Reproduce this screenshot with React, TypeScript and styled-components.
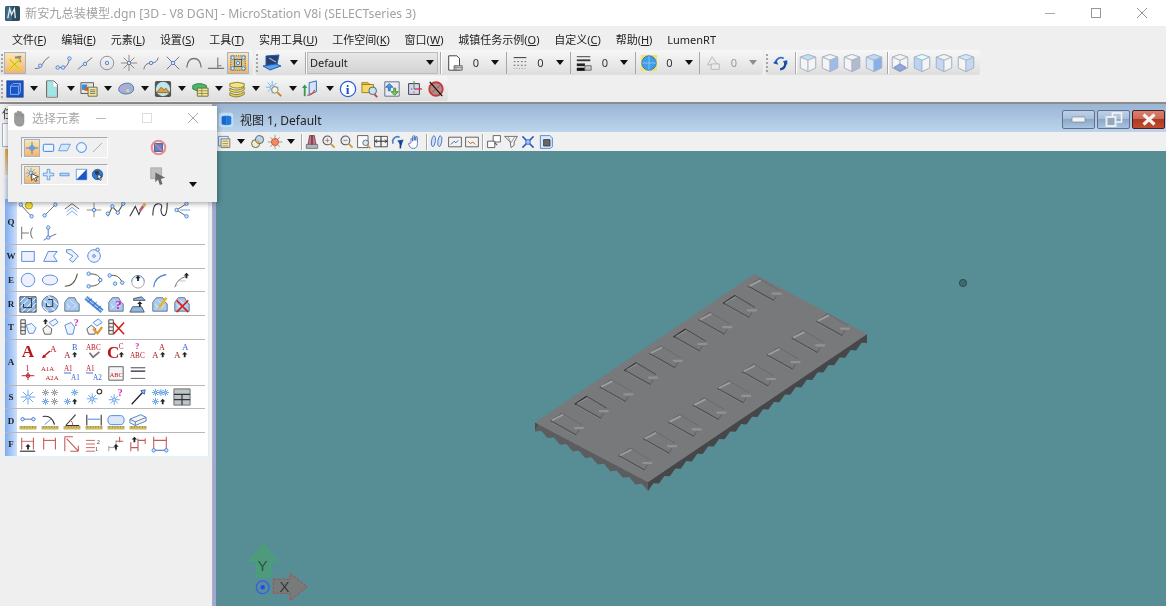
import React from "react";
import styled, { createGlobalStyle } from "styled-components";

const CJK = `"Noto Sans", "Noto Sans CJK SC", sans-serif`;

const GlobalStyle = createGlobalStyle`
	html, body {
		margin: 0;
		padding: 0;
		background: #efefef;
		overflow: hidden;
	}
	* {
		box-sizing: border-box;
	}
`;

/* small drawing helpers for the toolbar glyphs, all on a 20x20 grid */
const nd = (x: number, y: number) => (
	<circle cx={x} cy={y} r="1.9" fill="#dbe8fb" stroke="#3f7fd6" strokeWidth="1" />
);
const ln = (d: string, c = "#6a6a70", w = 1) => (
	<path d={d} fill="none" stroke={c} strokeWidth={w} />
);
const sh = (d: string, fill: string, stroke = "#4a86d8") => (
	<path d={d} fill={fill} stroke={stroke} strokeWidth="1" />
);
const txt = (x: number, y: number, s: string, size: number, c: string, bold = false) => (
	<text
		x={x}
		y={y}
		fontSize={size}
		fill={c}
		fontFamily='"Liberation Serif", serif'
		fontWeight={bold ? 700 : 400}
	>
		{s}
	</text>
);
const arrowUp = (x: number, y: number) => (
	<path d={`M${x} ${y}l3 3h-2v3h-2v-3h-2z`} fill="#222" />
);
const ruler = (
	<>
		<rect x="1" y="16" width="18" height="3" fill="#d8c25e" stroke="#a0903c" strokeWidth=".5" />
		{ln("M3 16v1.5M6 16v1.5M9 16v1.5M12 16v1.5M15 16v1.5M18 16v1.5", "#6b5f22", 0.7)}
	</>
);
const flake = (x: number, y: number, r: number, c = "#4a96e6") => (
	<>
		{ln(
			`M${x - r} ${y}H${x + r}M${x} ${y - r}V${y + r}M${x - r * 0.7} ${y - r * 0.7}L${x + r * 0.7} ${y + r * 0.7}M${x - r * 0.7} ${y + r * 0.7}L${x + r * 0.7} ${y - r * 0.7}`,
			c,
			0.9,
		)}
		<circle cx={x} cy={y} r={r * 0.3} fill="#cfe4fb" stroke={c} strokeWidth=".7" />
	</>
);
const area = (extra: React.ReactNode) => (
	<>
		{sh("M2 18V8l4-5h7l2 4 3 3v8z", "#a9c9ee", "#5b6f8a")}
		{ln("M4 10l3 3M8 6l4 4M5 15l3-3M11 15l3-3M13 10l2 2", "#e7f1fc", 1)}
		{extra}
	</>
);
const cube = (top: string, left: string, right: string) => (
	<>
		{sh("M10 0.5l8.5 3v12l-8.5 4-8.5-4v-12z", "#f4f4f4", "#a8b4c4")}
		{sh("M1.5 3.5l8.5 3.5 8.5-3.5-8.5-3z", top, "#a8b4c4")}
		{sh("M1.5 3.5l8.5 3.5v12.500l-8.5-4z", left, "#a8b4c4")}
		{sh("M18.500 3.500l-8.500 3.500v12.500l8.500-4z", right, "#a8b4c4")}
	</>
);
const dim = (body: React.ReactNode) => (
	<>
		{ln("M3 3v13M16 3v13", "#c45a5a", 1.2)}
		{body}
	</>
);

const ICONS: Record<string, React.ReactNode> = {
	select: (
		<>
			{ln("M10 4l7-1M14 3l2 6", "#8a8a8a", 2.4)}
			{ln("M4 6l11 11M15 6L4 17", "#f1e12a", 2.8)}
			{ln("M4 6l11 11M15 6L4 17", "#8c7a12", 0.5)}
		</>
	),
	s1: <>{ln("M2 16q6 1 8-4t8-9")}{nd(8, 13)}</>,
	s2: <>{ln("M3 15h6q5 0 7-9")}{nd(3, 15)}{nd(9, 15)}{nd(16, 5)}</>,
	s3: <>{ln("M2 17L18 4")}{nd(10, 11)}</>,
	s4: <><circle cx="10" cy="10" r="7.5" fill="none" stroke="#8a8a8a" />{nd(10, 10)}</>,
	s5: <>{ln("M1 10h18M10 1v18M4 4l12 12M16 4L4 16", "#8c7f6a")}{nd(10, 10)}</>,
	s6: <>{ln("M2 17q1-7 8-7t8-6")}{nd(10, 10)}</>,
	s7: <>{ln("M3 3l14 14M17 3L3 17")}{nd(10, 10)}</>,
	s8: <>{ln("M2 15q1-10 8-10t8 10", "#777", 1.4)}</>,
	s9: <>{ln("M1 16h18M12 4v12M12 13h4", "#777", 1.2)}</>,
	grid: (
		<>
			<rect x="2" y="2" width="16" height="16" fill="#d8c68c" stroke="#54503c" strokeDasharray="1 1" />
			<rect x="6" y="6" width="8" height="8" fill="none" stroke="#54503c" />
			{nd(4, 4)}{nd(16, 4)}{nd(4, 16)}{nd(16, 16)}{nd(10, 10)}
		</>
	),
	laptop: (
		<>
			{sh("M4 3l13-1-2 9-11 2z", "#2c3e66", "#1c5fbc")}
			{sh("M1 13l13-2 5 2-11 4z", "#5ba3e6", "#1c5fbc")}
			{ln("M7 5l7 4", "#7fb7ea", 1.4)}
		</>
	),
	colorDoc: (
		<>
			{sh("M3 2h9l3 3v13H3z", "#fff", "#333")}
			{sh("M9 13h9v5H9z", "#c9c9c9", "#666")}
			{ln("M9 15h9M11 13v5", "#777", 0.7)}
		</>
	),
	lines: <>{ln("M3 4h14", "#444", 1.2)}{ln("M3 8.500h2M7 8.500h2M11 8.500h2M15 8.500h2M3 12.500h2M7 12.500h2M11 12.500h2M15 12.500h2", "#555", 0.9)}{ln("M3 16h1M6 16h1M9 16h1M12 16h1M15 16h1", "#777", 0.8)}</>,
	weight: (
		<>
			{ln("M2 3h15", "#333", 1)}{ln("M2 7h15", "#333", 2)}{ln("M2 12h9", "#222", 3)}{ln("M2 17h9", "#111", 3.5)}
			{sh("M11 13h7v5h-7z", "#c9c9c9", "#666")}
		</>
	),
	transp: (
		<>
			<rect x="1" y="1" width="18" height="18" fill="#f1e078" />
			<circle cx="10" cy="10" r="8" fill="#3f9fe6" stroke="#2f6fae" />
			{ln("M2 10h16M10 2v16", "#9fd0f5", 0.8)}
		</>
	),
	prio: <>{sh("M9 3l6 9H4z", "#ececec", "#b4b4b4")}{sh("M8 11h9v6H8z", "#ececec", "#b4b4b4")}</>,
	update: (
		<>
			{ln("M4 11a6 6 0 0 1 9-6", "#3a6fc4", 2)}
			{ln("M14 8a6 6 0 0 1-5 9", "#12479e", 2.6)}
			<path d="M1 10l4-3 2 5zM12 8l5-1v5z" fill="#1c57b4" />
		</>
	),
	c1: cube("#bfe0f7", "#f4f4f4", "#f4f4f4"),
	c2: cube("#f4f4f4", "#f4f4f4", "#9dbcec"),
	c3: cube("#f4f4f4", "#f4f4f4", "#b3b9d0"),
	c4: cube("#bfd9f5", "#d5e6fa", "#86b0ea"),
	c5: <>{cube("#f4f4f4", "#f4f4f4", "#f4f4f4")}{sh("M3 15l7-4 7 4-7 4z", "#8fa9e0", "#7a8ab0")}</>,
	c6: cube("#dff", "#b8d4f4", "#f4f4f4"),
	c7: cube("#f4f4f4", "#c4d8f4", "#f4f4f4"),
	c8: cube("#d5e6fa", "#f4f4f4", "#c4d8f4"),
	blueCube: (
		<>
			<rect x="1" y="1" width="18" height="18" fill="#1a55c8" stroke="#123d96" />
			{ln("M5 7h9v9H5zM5 7l3-3h8v9l-2 3M14 7l2-3", "#8fb2ee", 1)}
		</>
	),
	doc: <>{sh("M4 1h8l4 4v14H4z", "#fff", "#555")}{sh("M5 2h6v6h4v10H5z", "#9fe6e6", "#aacccc")}</>,
	ref: (
		<>
			{sh("M1 3h14v12H1z", "#e6e6e6", "#555")}
			<rect x="2" y="5" width="6" height="6" fill="#2f8fe0" />
			<rect x="5" y="8" width="4" height="4" fill="#e25a2a" />
			{sh("M9 8h10v10H9z", "#f4e8a0", "#6a6a40")}
			{ln("M11 11h6M11 13h6M11 15h6", "#666", 0.9)}
		</>
	),
	ball: (
		<>
			{sh("M2 12q-1-6 6-8 7-2 10 3 2 6-4 8-8 2-12-3z", "#9ab2de", "#5c6f98")}
			<circle cx="7" cy="8" r="2" fill="#df97c4" />
			<circle cx="12" cy="12" r="2" fill="#e8d08a" />
		</>
	),
	render: (
		<>
			<rect x="1" y="1" width="18" height="18" rx="2" fill="#555" />
			<circle cx="10" cy="10" r="8" fill="#bfe3ef" />
			{sh("M3 14l5-6 3 3 2-2 4 5z", "#d9a040", "#9a6a1a")}
		</>
	),
	tableDb: (
		<>
			{sh("M2 6q7-4 15 0v4q-8 4-15 0z", "#49b86a", "#2a7c42")}
			{sh("M7 9h12v9H7z", "#f2e59a", "#6d6a3c")}
			{ln("M7 12h12M7 15h12M12 9v9", "#6d6a3c", 0.7)}
		</>
	),
	stack: (
		<>
			{sh("M2 14q8 5 16-1v3q-8 5-16 1z", "#e3cf5e", "#8b7a2a")}
			{sh("M2 9q8 5 16-1v3q-8 5-16 1z", "#ecdc70", "#8b7a2a")}
			{sh("M2 4q8-3 16 0v3q-8 4-16 0z", "#f2e684", "#8b7a2a")}
		</>
	),
	lightMag: (
		<>
			{flake(8, 8, 7, "#5aa8e6")}
			<circle cx="11" cy="11" r="3.6" fill="#f4f4d8" stroke="#777" />
			{ln("M14 14l4 4", "#d07a2a", 2)}
		</>
	),
	transform: (
		<>
			{sh("M8 3l8-2v12l-8 3z", "#d4e4f8", "#2b62b0")}
			{ln("M3 18V8", "#2f9e4f", 2)}
			<path d="M3 5l3 4H0z" fill="#2f9e4f" />
			{ln("M6 17q6 0 8-6", "#d0443c", 1.4)}
		</>
	),
	info: (
		<>
			<circle cx="10" cy="10" r="8.5" fill="#fff" stroke="#2a62d8" strokeWidth="1.4" />
			{txt(7.6, 15.5, "i", 15, "#1a4fc8", true)}
		</>
	),
	folderSearch: (
		<>
			{sh("M1 3h7l2 2h-9z", "#f2c94a", "#9a7a1a")}
			{sh("M1 5h13v9H1z", "#f6d768", "#9a7a1a")}
			<circle cx="13" cy="12" r="4.2" fill="#bfe6f6" stroke="#555" />
			{ln("M15 16l3 3", "#c83a3a", 2)}
		</>
	),
	swap: (
		<>
			{sh("M2 2h16v16H2z", "#e4ecf4", "#667")}
			{sh("M7 4l4 4H8v4H6V8H3z", "#4a9ce6", "#2a6cb0")}
			{sh("M13 17l-4-4h3V9h2v4h3z", "#7ec850", "#4a8a2c")}
		</>
	),
	axes: (
		<>
			{sh("M4 4h12v12H4z", "#d6d4f4", "#333")}
			{ln("M10 1v9", "#2fa84f", 1.2)}
			{ln("M10 10h9", "#d8332c", 1.4)}
			{ln("M7 10h1M10 13v1", "#222", 1.2)}
		</>
	),
	noRender: (
		<>
			<circle cx="10" cy="10" r="7.5" fill="#a8908c" stroke="#c83a3a" strokeWidth="2" />
			{ln("M3 2l14 16", "#111", 1.4)}
			{ln("M5 14l10-8", "#c83a3a", 1)}
		</>
	),
	fence: (
		<>
			{sh("M2 3h12v12H2z", "#eaf2ff", "#2f7ad8")}
			{sh("M5 6h11v11H5z", "#f6e8a4", "#666")}
			{ln("M7 9h7M7 12h7M7 15h7", "#666", 0.8)}
		</>
	),
	sun: (
		<>
			{ln("M1 10h18M10 1v18M4 4l12 12M16 4L4 16", "#8a8a8a", 1)}
			<circle cx="10" cy="10" r="4.5" fill="#f08a6a" stroke="#c8502a" />
		</>
	),
	eyeBall: (
		<>
			<circle cx="7" cy="12" r="5" fill="#efefd0" stroke="#444" />
			<circle cx="12" cy="7" r="5" fill="#b8d8f0" stroke="#444" />
			<circle cx="10" cy="10" r="2" fill="#d8a838" />
		</>
	),
	lamp: (
		<>
			{sh("M7 2h6l2 12H5z", "#c8758a", "#6a3a4a")}
			{sh("M3 13h14v5H3z", "#b4b4bc", "#666")}
			{ln("M10 2v11", "#4a2a2a", 1.4)}
		</>
	),
	zoomIn: <><circle cx="8" cy="8" r="5.5" fill="#e6eef0" stroke="#556" strokeWidth="1.3" />{ln("M5.5 8h5M8 5.5v5", "#c06a3a")}{ln("M12 12l5 5", "#c89a4a", 2.4)}</>,
	zoomOut: <><circle cx="8" cy="8" r="5.5" fill="#e6eef0" stroke="#556" strokeWidth="1.3" />{ln("M5.5 8h5", "#c06a3a")}{ln("M12 12l5 5", "#c89a4a", 2.4)}</>,
	winArea: <>{sh("M2 2h13v15H2z", "#fff", "#444")}<circle cx="12" cy="11" r="3.5" fill="#d8e8f4" stroke="#555" />{ln("M14 14l4 4", "#c89a4a", 2)}</>,
	fit: <>{sh("M2 3h16v13H2z", "#f4f4f4", "#333")}{ln("M2 9h16M10 3v13M5 7l-2 2 2 2M15 7l2 2-2 2", "#222", 1.2)}</>,
	rotate: <>{ln("M4 12a6 6 0 0 1 8-8", "#4a7fd0", 2)}<path d="M9 8l8-1-3 8z" fill="#1f55a8" />{ln("M13 9v9", "#123d86", 2)}</>,
	hand: <>{sh("M5 11V6l1-1 1 1v3-6l1-1 1 1v5-5l1-1 1 1v5-4l1-1 1 1v8q0 6-5 6t-6-6z", "#fff", "#3a62b8")}</>,
	feet: <>{sh("M6 2q3 1 2 7t-3 7q-3-1-2-7t3-7z", "#cfe0f8", "#2f62b8")}{sh("M14 2q3 1 2 7t-3 7q-3-1-2-7t3-7z", "#cfe0f8", "#2f62b8")}</>,
	prevView: <>{sh("M2 4h16v12H2z", "#f2f2f2", "#444")}{ln("M5 13l4-4 2 2 3-3", "#2b62b0", 1.2)}</>,
	nextView: <>{sh("M2 4h16v12H2z", "#f2f2f2", "#444")}{ln("M5 9l3 3 3-2 3 3", "#b05a2b", 1.2)}</>,
	copyView: <>{sh("M9 2h9v8H9z", "#fff", "#444")}{sh("M2 9h9v8H2z", "#fff", "#444")}{ln("M11 11l3 3", "#2b62b0", 1.4)}</>,
	clip: <>{sh("M2 3h16l-4 7v4l-4 3-1-7z", "#f4f4f4", "#555")}{ln("M6 3l4 8 5-8", "#888")}</>,
	camera: <>{ln("M3 3l14 14M17 3L3 17", "#2f62c8", 2)}<circle cx="10" cy="10" r="3" fill="#9fc0f0" stroke="#2f62c8" /></>,
	viewSet: <>{sh("M3 2h12l3 3v11l-3 2H3z", "#dbe9fb", "#2f7ad8")}{sh("M7 7h8v8H7z", "#666", "#333")}</>,
	q1: <>{ln("M2 4l7 8 5 5", "#5a5a60")}{nd(2, 4)}{nd(14, 17)}<circle cx="11" cy="5" r="4" fill="#f4e03a" stroke="#a4942a" /></>,
	q2: <>{ln("M4 16L16 4")}{nd(4, 16)}{nd(16, 4)}</>,
	q3: <>{ln("M2 9l8-6 8 6", "#555")}{ln("M4 12l6-5 6 5", "#6ba2e6")}{ln("M4 16l6-5 6 5", "#6ba2e6")}</>,
	q4: <>{ln("M2 10h16M10 2v16", "#8c7f6a")}{nd(10, 10)}</>,
	q5: (
		<>
			{ln("M1 17L6 6l6 7 6-10", "#59502a", 1.2)}
			{nd(6, 6)}{nd(12, 13)}{nd(18, 3)}{nd(1, 14)}
		</>
	),
	q6: <>{ln("M1 17L7 6l4 9 4-9", "#333", 1.2)}{ln("M12 11l6-8", "#c85a8a", 3)}{ln("M16 6l2-3", "#e6c84a", 3)}</>,
	q7: <>{ln("M2 16q0-13 6-13t3 7q1 7 4 6t3-14", "#333", 1.2)}</>,
	q8: <>{ln("M4 10L15 3M4 10l11 7", "#555")}{ln("M8 10h11", "#9cc2ec", 1.6)}{nd(4, 10)}{nd(15, 3)}{nd(15, 17)}</>,
	q9: <>{ln("M3 3v14M3 10h8", "#666")}{ln("M15 4q-4 6 0 12", "#555")}</>,
	q10: <>{ln("M8 4v11l9-4M8 15l-5 3", "#4a6a9c")}{nd(8, 4)}{nd(8, 15)}</>,
	w1: sh("M3 5h14v11H3z", "#eef0fe"),
	w2: sh("M3 16l5-11h10l-4 5 4 6z", "#eef0fe"),
	w3: sh("M4 3h5l8 7-6 7-4-3 4-4-7-4z", "#eef0fe"),
	w4: <>{sh("M10 3a7 7 0 1 0 .1 0z", "#eef0fe")}<circle cx="10" cy="10" r="1.5" fill="none" stroke="#4a86d8" />{nd(14, 3)}</>,
	e1: <circle cx="10" cy="10" r="7.5" fill="#eef0fe" stroke="#4a86d8" />,
	e2: <ellipse cx="10" cy="10" rx="8.5" ry="5.5" fill="#eef0fe" stroke="#4a86d8" />,
	e3: ln("M2 17q11 0 14-14", "#5f5a3c", 1.2),
	e4: <>{ln("M4 3q13 0 13 7t-13 7", "#5f5a3c", 1.1)}{nd(4, 3)}{nd(17, 10)}{nd(4, 17)}</>,
	e5: <>{ln("M3 5q10-2 14 8", "#5f5a3c", 1.1)}{nd(3, 5)}{nd(17, 13)}{nd(9, 14)}</>,
	e6: (
		<>
			{ln("M3 12a7 7 0 0 1 14 0", "#4a7ab8", 1.1)}
			{ln("M3 12a7 7 0 0 0 14 0", "#888", 0.8)}
			{arrowUp(10, 5)}
		</>
	),
	e7: ln("M3 18q1-12 14-14", "#4a86d8", 1.2),
	e8: <>{ln("M2 18q3-10 13-12", "#6a6a6a", 1)}{ln("M2 18l3-3M5 11h9", "#b8b098", 0.8)}{arrowUp(15, 2)}</>,
	r1: (
		<>
			{sh("M1 2h18v17H1z", "#8ab6e8", "#333")}
			{ln("M1 8l6-6M1 14L13 2M3 19L19 3M9 19l10-10M15 19l4-4", "#fff", 1)}
			{sh("M10 4h4v10H5v-4", "none", "#222")}
		</>
	),
	r2: (
		<>
			<circle cx="10" cy="10" r="9" fill="#9cc2ec" stroke="#4a6a9c" />
			{ln("M3 6l12 11M2 13l6 6M8 1l11 10", "#eef5fd", 1.2)}
			{sh("M8 5h5v8H6v-4", "none", "#222")}
		</>
	),
	r3: area(null),
	r4: (
		<>
			{ln("M1 3l18 15", "#4a8ad8", 5)}
			{ln("M1 3l18 15", "#e4eefb", 1)}
			{ln("M3 8l5-4M8 12l5-4M13 16l5-4", "#2f62b8", 1)}
		</>
	),
	r5: area(txt(9, 15, "?", 15, "#d020c0", true)),
	r6: (
		<>
			{sh("M5 4l9-2 4 4H5z", "#8ab6e8", "#555")}
			{sh("M1 19l3-6h10l3 6z", "#8ab6e8", "#555")}
			{arrowUp(12, 7)}
		</>
	),
	r7: area(ln("M9 14l8-11", "#e6b830", 3)),
	r8: area(ln("M4 6l13 13M17 6L4 19", "#d8201c", 1.8)),
	t1: (
		<>
			{sh("M2 2h5v16H2z", "#efefef", "#444")}
			{ln("M2 6h5M2 10h5M2 14h5", "#444")}
			{sh("M8 8l6-2 5 5-3 6h-5z", "#eef4ff", "#4a86d8")}
		</>
	),
	t2: <>{sh("M2 12l5-4 5 4-1 6H4z", "#f4f4f4", "#555")}{sh("M9 5l7-4 3 4-6 4z", "#eef4ff", "#4a86d8")}{arrowUp(5, 1)}</>,
	t3: <>{sh("M2 8l7-3 4 5-2 8H5z", "#eef4ff", "#4a86d8")}{txt(12, 9, "?", 11, "#d020c0", true)}</>,
	t4: (
		<>
			{sh("M2 12l5-4 5 4-1 6H4z", "#f4f4f4", "#555")}
			{sh("M9 5l6-4 4 4-6 4z", "#eef4ff", "#4a86d8")}
			{ln("M9 12l5 5 5-7", "#e2962a", 2.4)}
		</>
	),
	t5: (
		<>
			{sh("M2 2h5v16H2z", "#efefef", "#444")}
			{ln("M2 6h5M2 10h5M2 14h5", "#444")}
			{ln("M7 5l12 13M19 5L7 18", "#d8201c", 1.8)}
		</>
	),
	a1: txt(3, 17, "A", 19, "#b8161c", true),
	a2: <>{txt(10, 11, "A", 10, "#b8161c")}{ln("M2 17l8-7", "#b8161c", 1.6)}<path d="M1 18l5-1-3-3z" fill="#b8161c" /></>,
	a3: <>{txt(10, 9, "B", 9, "#2f62d8")}{txt(1, 18, "A", 10, "#a82020")}{arrowUp(13, 11)}</>,
	a4: <>{txt(1, 9, "ABC", 8, "#b8161c")}{ln("M5 12l4 5 7-6", "#777", 2)}</>,
	a5: <>{txt(0, 18, "C", 19, "#b8161c", true)}{txt(13, 8, "C", 8, "#b8161c")}{arrowUp(16, 11)}</>,
	a6: <>{txt(7, 8, "?", 9, "#d020c0", true)}{txt(1, 18, "ABC", 8, "#b8161c")}</>,
	a7: <>{txt(9, 9, "A", 9, "#b8161c")}{txt(1, 18, "A", 10, "#a82020")}{arrowUp(13, 11)}</>,
	a8: <>{txt(10, 9, "A", 10, "#2f62d8")}{txt(1, 18, "A", 10, "#a82020")}{arrowUp(13, 11)}</>,
	a9: <>{txt(7, 8, "1", 9, "#b8161c")}{ln("M3 13h14M10 9v9", "#b8161c", 1)}<circle cx="10" cy="13" r="2" fill="none" stroke="#b8161c" /></>,
	a10: <>{txt(0, 8, "A1A", 7.5, "#b8161c")}{txt(5, 18, "A2A", 7.5, "#b8161c")}</>,
	a11: <>{txt(1, 8, "A1", 8, "#b8161c")}{ln("M1 10h8", "#2f62d8")}{txt(9, 18, "A1", 8, "#2f62d8")}</>,
	a12: <>{txt(1, 8, "A1", 8, "#b8161c")}{ln("M1 10h8", "#2f62d8")}{txt(9, 18, "A2", 8, "#2f62d8")}</>,
	a13: <>{sh("M2 3h16v15H2z", "#f4f4f4", "#555")}{txt(3, 14, "ABC", 7, "#b8161c")}</>,
	a14: <>{ln("M2 4h16M2 8h16", "#223", 1.4)}{ln("M2 16h16", "#555", 1)}{ln("M2 4h16", "#fff", 0.5)}</>,
	f1: flake(10, 10, 8),
	f2: <>{flake(5, 5, 4, "#888")}{flake(15, 5, 4, "#888")}{flake(5, 15, 4)}{flake(15, 15, 4, "#888")}</>,
	f3: <>{flake(13, 5, 4)}{flake(5, 15, 4)}{arrowUp(13, 12)}</>,
	f4: <>{flake(8, 12, 6)}<circle cx="16" cy="4" r="2.6" fill="none" stroke="#333" strokeWidth="1.2" /></>,
	f5: <>{flake(8, 13, 6)}{txt(12, 9, "?", 11, "#d020c0", true)}</>,
	f6: <>{ln("M3 18L15 5", "#222", 1.4)}{sh("M13 3l5-1-1 5z", "#9cc2ec", "#2f62b8")}</>,
	f7: <>{flake(5, 5, 4)}{flake(11, 5, 4)}{flake(16, 5, 4)}{flake(5, 15, 4)}{arrowUp(13, 12)}</>,
	f8: <>{sh("M1 1h18v18H1z", "#bcc4c8", "#666")}{ln("M1 7h18M1 13h18M10 7v12", "#333", 1.3)}</>,
	d1: <>{ln("M4 8h12", "#4a6a9c")}{nd(4, 8)}{nd(16, 8)}{ruler}</>,
	d2: <>{ln("M2 5q10-2 13 9", "#333", 1.3)}{ln("M4 14l7-6", "#4a86d8")}{ruler}</>,
	d3: <>{ln("M3 15L14 3M3 15h15", "#333", 1.2)}{ln("M11 15q0-4-3-6", "#d0443c")}{ruler}</>,
	d4: <>{ln("M2 3v12M18 3v12", "#333", 1.2)}{ln("M3 8h14", "#2f7ad8")}{ruler}</>,
	d5: <>{sh("M5 4h10q4 0 4 5t-4 5H5q-4 0-4-5t4-5z", "#dbe8fb")}{ruler}</>,
	d6: <>{sh("M1 8l12-5 6 3v4l-12 5-6-3z", "#f4f4f4", "#4a7ab8")}{ln("M1 8l6 3 12-5M7 11v4", "#4a7ab8")}{ruler}</>,
	g1: dim(<>{ln("M3 7h13", "#c45a5a")}{ln("M1 18h17", "#333", 1.3)}{arrowUp(10, 10)}</>),
	g2: dim(ln("M3 6h13", "#c45a5a", 1.2)),
	g3: <>{ln("M2 2v16M2 2h9", "#c45a5a", 1.2)}{ln("M4 4l13 14M17 18H8M17 18v-6", "#c45a5a", 1.2)}</>,
	g4: <>{ln("M1 6h10M1 10h10M1 14h10M1 18h10", "#c45a5a", 1)}{txt(13, 10, "2", 7, "#333")}{txt(11, 18, "1", 7, "#333")}</>,
	g5: <>{ln("M2 12v6M2 14h8M10 6v12", "#999")}{ln("M10 7h8M14 2v6", "#c45a5a", 1.2)}{arrowUp(10, 10)}</>,
	g6: <>{ln("M2 8v10M10 4v14M18 4v6M2 14h8M10 6h8", "#c45a5a", 1.2)}{arrowUp(6, 2)}</>,
	g7: <>{ln("M3 2v15M17 2v15M3 6h14", "#c45a5a", 1.2)}{ln("M3 17h14", "#4a7ab8", 1.2)}{nd(3, 17)}{nd(17, 17)}</>,
	pick: <><circle cx="10" cy="10" r="3.4" fill="#bcd6f8" stroke="#2f7ad8" />{ln("M1 10h18M10 1v18", "#2f7ad8", 1.2)}</>,
	mRect: <rect x="2" y="5" width="16" height="11" rx="1.5" fill="#eef4ff" stroke="#2a7ae2" strokeWidth="1.4" />,
	mShape: sh("M1 15l4-10h14l-5 10z", "#d8e8fb", "#2a7ae2"),
	mCircle: <circle cx="10" cy="10" r="7.5" fill="#eef4ff" stroke="#2a7ae2" strokeWidth="1.4" />,
	mLine: ln("M3 17L17 3", "#8aa0c8", 1.2),
	mAll: (
		<>
			{flake(8, 8, 7, "#3a86d8")}
			{sh("M9 9l9 4-4 1 2 4-2 1-2-4-3 3z", "#fff", "#222")}
		</>
	),
	mAdd: sh("M8 2h4v6h6v4h-6v6H8v-6H2V8h6z", "#dbe8fb", "#2a7ae2"),
	mSub: sh("M3 8h14v4H3z", "#bcd6f8", "#2a7ae2"),
	mInv: <>{sh("M2 2h16v16H2z", "#fff", "#2a7ae2")}<path d="M18 2v16H2z" fill="#1a55c8" /></>,
	mGlobe: (
		<>
			<circle cx="10" cy="10" r="8" fill="#2f7ad8" stroke="#1a3f8a" />
			<path d="M6 5l5-1 2 4-4 3-3-2z" fill="#3a3a3a" />
			{sh("M11 10l6 3-3 1 2 4-2 1-2-4-2 2z", "#fff", "#222")}
		</>
	),
	noBlock: (
		<>
			<circle cx="10" cy="10" r="8" fill="none" stroke="#ea8c8c" strokeWidth="2.4" />
			<rect x="5.5" y="5.5" width="9" height="9" fill="#6c84c4" stroke="#2a4aa0" />
			{ln("M5.5 5.5l9 9", "#d88", 1.2)}
		</>
	),
	greyCursor: (
		<>
			<rect x="2" y="1" width="12" height="12" fill="#c0c0c0" stroke="#a8a8a8" />
			<path d="M7 6l11 6-5 1 2 6-3 1-2-6-3 3z" fill="#6a6a6a" />
		</>
	),
	hand2: (
		<>
			<path d="M3 10V4l2-1 1 4V2l2-1 1 6V2l2 0 1 6V4l2 1v9q0 5-5 5t-6-5z" fill="#9c9c9c" stroke="#777" strokeWidth=".6" />
		</>
	),
	viewCube: (
		<>
			<rect x="1" y="1" width="18" height="18" rx="4" fill="#bfe0f7" />
			{sh("M5 6l5-1v11l-5-1z", "#1668d0", "#1668d0")}
			{sh("M11 5l5 1v9l-5 1z", "#1c7ae0", "#1668d0")}
		</>
	),
};

const Icon = ({ name, size = 18 }: { name: string; size?: number }) => (
	<svg width={size} height={size} viewBox="0 0 20 20" overflow="visible">
		{ICONS[name]}
	</svg>
);

/* what each toolbar holds */
const SNAP_TOOLS = ["s1", "s2", "s3", "s4", "s5", "s6", "s7", "s8", "s9"];
const STATS = [
	{ icon: "colorDoc" },
	{ icon: "lines" },
	{ icon: "weight" },
	{ icon: "transp" },
	{ icon: "prio", muted: true },
];
const VIEW_CUBES_A = ["c1", "c2", "c3", "c4"];
const VIEW_CUBES_B = ["c5", "c6", "c7", "c8"];
const DROP_TOOLS = ["blueCube", "doc", "ref", "ball", "render", "tableDb", "stack", "lightMag", "transform"];
const PLAIN_TOOLS = ["info", "folderSearch", "swap", "axes", "noRender"];
const MENUS: [string, string][] = [
	["文件", "F"],
	["编辑", "E"],
	["元素", "L"],
	["设置", "S"],
	["工具", "T"],
	["实用工具", "U"],
	["工作空间", "K"],
	["窗口", "W"],
	["城镇任务示例", "O"],
	["自定义", "C"],
	["帮助", "H"],
];
const TOOLBOX: { key: string; rows: string[][] }[] = [
	{ key: "Q", rows: [["q1", "q2", "q3", "q4", "q5", "q6", "q7", "q8"], ["q9", "q10"]] },
	{ key: "W", rows: [["w1", "w2", "w3", "w4"]] },
	{ key: "E", rows: [["e1", "e2", "e3", "e4", "e5", "e6", "e7", "e8"]] },
	{ key: "R", rows: [["r1", "r2", "r3", "r4", "r5", "r6", "r7", "r8"]] },
	{ key: "T", rows: [["t1", "t2", "t3", "t4", "t5"]] },
	{
		key: "A",
		rows: [
			["a1", "a2", "a3", "a4", "a5", "a6", "a7", "a8"],
			["a9", "a10", "a11", "a12", "a13", "a14"],
		],
	},
	{ key: "S", rows: [["f1", "f2", "f3", "f4", "f5", "f6", "f7", "f8"]] },
	{ key: "D", rows: [["d1", "d2", "d3", "d4", "d5", "d6"]] },
	{ key: "F", rows: [["g1", "g2", "g3", "g4", "g5", "g6", "g7"]] },
];
const VIEW_TOOLS_A = ["zoomIn", "zoomOut", "winArea", "fit", "rotate", "hand"];

/* the plate in the view, in page coordinates */
type Pt = [number, number];
const SLOT_ROWS: Pt[] = [
	[550, 419],
	[618.3, 454],
];

function sawtooth(a: Pt, b: Pt, n: number, deep: number, shallow: number) {
	const pts: string[] = [`${a[0]},${a[1]}`, `${b[0]},${b[1]}`];
	for (let i = n * 2; i >= 0; i--) {
		const t = i / (n * 2);
		const depth = i % 2 === 0 ? deep : shallow;
		pts.push(`${a[0] + (b[0] - a[0]) * t},${a[1] + (b[1] - a[1]) * t + depth}`);
	}
	return pts.join(" ");
}

const Slot = ({ x, y, strong }: { x: number; y: number; strong: boolean }) => (
	<g transform={`translate(${x} ${y})`} fill="none">
		{/* long outer edge, doubled so it reads as a groove */}
		<path d="M1 2L26 16" stroke="#4c4c4e" strokeWidth="1.2" />
		<path d="M2 3.500L25 16.500" stroke="#8c8c8d" strokeWidth=".6" />
		{/* short end of the slot with its light cap */}
		<path d="M0 2L12 -6" stroke={strong ? "#2c2c2e" : "#5e5e60"} strokeWidth={strong ? 1.1 : 0.9} />
		<path d="M2.500 1L12.500 -4" stroke="#9e9e9e" strokeWidth={strong ? 0.6 : 1.8} strokeLinecap="round" />
		{/* far edge: whole line on the dark slots, fainter on the others */}
		<path d="M12 -6L32 6" stroke={strong ? "#444446" : "#68686a"} strokeWidth=".9" />
		{/* rounded tip */}
		<path d="M25 9h8" stroke="#929293" strokeWidth="2.200" strokeLinecap="round" />
		<path d="M26 16L29 11" stroke="#58585a" strokeWidth=".8" />
	</g>
);

const Scene = () => (
	<SceneSvg viewBox="216 151 950 455" preserveAspectRatio="none">
		<polygon points={sawtooth([535, 422.5], [648, 482], 9, 9, 5)} fill="#5d5d5f" />
		<polygon points={sawtooth([648, 482], [867, 334], 20, 9, 5)} fill="#47474a" />
		<polygon points="535,422.5 535,430 538,424" fill="#4a4a4c" />
		<polygon points="535,422.5 754.5,274 867,334 648,482" fill="#78797a" />
		{SLOT_ROWS.map(([bx, by], r) =>
			Array.from({ length: 9 }, (_, i) => (
				<Slot
					key={`${r}-${i}`}
					x={bx + i * 24.7}
					y={by - i * 16.8}
					strong={i % 2 === 1 && r === 0}
				/>
			)),
		)}
		<circle cx="963" cy="283" r="3.6" fill="#3d6a70" stroke="#2f4a50" />
		<path
			d="M263.3 543.3L277.3 561H270.7V576.7H256.7V561H249.3Z"
			fill="#4f9a7c"
			stroke="#35b565"
			strokeDasharray="3 1.5"
		/>
		<text x="257.5" y="571" fontSize="15" fill="#2c5148" fontFamily='"Liberation Sans", sans-serif'>
			Y
		</text>
		<circle cx="262.7" cy="587.3" r="6.4" fill="#5a8aa0" stroke="#2f62d8" strokeWidth="1.2" />
		<circle cx="262.7" cy="587.3" r="2.2" fill="#1f4fe0" />
		<path
			d="M273.3 579.3H290V573.3L307.3 586.7L290 600.7V593.3H273.3Z"
			fill="#777b7a"
			stroke="#b04a50"
			strokeDasharray="3 1.5"
		/>
		<text x="279.5" y="592" fontSize="15" fill="#333a3a" fontFamily='"Liberation Sans", sans-serif'>
			X
		</text>
	</SceneSvg>
);

export default function App() {
	return (
		<Page>
			<GlobalStyle />
			<TitleBar>
				<AppLogo viewBox="0 0 16 16">
					<rect width="16" height="16" rx="2" fill="#2c4a5c" />
					<rect x="0.5" y="0.5" width="7" height="15" fill="#3f6c86" />
					<path d="M3 13L5 3l2 6 3-6 1 10" fill="none" stroke="#e6eef2" strokeWidth="1.4" />
				</AppLogo>
				<TitleText>新安九总装模型.dgn [3D - V8 DGN] - MicroStation V8i (SELECTseries 3)</TitleText>
				<WindowControls>
					<Control viewBox="0 0 12 12">
						<path d="M1 6.5h10" stroke="#aaa" />
					</Control>
					<Control viewBox="0 0 12 12">
						<rect x="1.5" y="1.5" width="9" height="9" fill="none" stroke="#999" />
					</Control>
					<Control viewBox="0 0 12 12">
						<path d="M1 1l10 10M11 1L1 11" stroke="#999" />
					</Control>
				</WindowControls>
			</TitleBar>
			<MenuBar>
				{MENUS.map(([label, key]) => (
					<MenuItem key={key}>
						{label}(<u>{key}</u>)
					</MenuItem>
				))}
				<MenuItem>LumenRT</MenuItem>
			</MenuBar>
			<ToolRow>
				<ToolGroup $width={253}>
					<Grip />
					<ToolCell $active $width={22}>
						<Icon name="select" />
					</ToolCell>
					<SnapTools>
						{SNAP_TOOLS.map((name) => (
							<ToolCell key={name} $width={21.8}>
								<Icon name={name} />
							</ToolCell>
						))}
						<ToolCell $active $width={21.8}>
							<Icon name="grid" />
						</ToolCell>
					</SnapTools>
				</ToolGroup>
				<ToolGroup $width={508}>
					<Grip />
					<ToolCell $width={26}>
						<Icon name="laptop" size={20} />
					</ToolCell>
					<DropArrow $width={18} />
					<Divider />
					<LevelSelect>
						Default
						<SelectArrow />
					</LevelSelect>
					<Divider />
					{STATS.map((stat) => (
						<StatItem key={stat.icon} $muted={stat.muted}>
							<Icon name={stat.icon} />
							<span>0</span>
							<DropArrow $width={16} $muted={stat.muted} />
						</StatItem>
					))}
				</ToolGroup>
				<ToolGroup $width={215}>
					<Grip />
					<ToolCell $width={24}>
						<Icon name="update" />
					</ToolCell>
					<Divider />
					{VIEW_CUBES_A.map((name) => (
						<ToolCell key={name} $width={22}>
							<Icon name={name} />
						</ToolCell>
					))}
					<Divider />
					{VIEW_CUBES_B.map((name) => (
						<ToolCell key={name} $width={22}>
							<Icon name={name} />
						</ToolCell>
					))}
				</ToolGroup>
			</ToolRow>
			<ToolRow>
				<ToolGroup $width={448}>
					<Grip />
					{DROP_TOOLS.map((name) => (
						<React.Fragment key={name}>
							<ToolCell $width={22}>
								<Icon name={name} />
							</ToolCell>
							<DropArrow $width={15} />
						</React.Fragment>
					))}
					{PLAIN_TOOLS.map((name) => (
						<ToolCell key={name} $width={22}>
							<Icon name={name} />
						</ToolCell>
					))}
				</ToolGroup>
			</ToolRow>
			<Workspace>
				<Dock>
					<DockTitle>任务</DockTitle>
					<DockTab />
					<TaskStrip>
						<TaskButton />
						<TaskRow />
					</TaskStrip>
					<Toolbox>
						{TOOLBOX.map((section) => (
							<ToolSection key={section.key}>
								<SectionKey>{section.key}</SectionKey>
								<div>
									{section.rows.map((row) => (
										<IconRow key={row[0]}>
											{row.map((name) => (
												<ToolboxCell key={name}>
													<Icon name={name} />
												</ToolboxCell>
											))}
										</IconRow>
									))}
								</div>
							</ToolSection>
						))}
					</Toolbox>
				</Dock>
				<DockEdge />
				<ViewWindow>
					<ViewTitle>
						<Icon name="viewCube" size={16} />
						<ViewName>视图 1, Default</ViewName>
						<ViewButtons>
							<ViewButton>
								<svg width="16" height="8" viewBox="0 0 16 8">
									<rect x="1" y="1" width="13" height="5" rx="1" fill="#f4f4f4" stroke="#68788c" strokeWidth=".6" />
								</svg>
							</ViewButton>
							<ViewButton>
								<svg width="18" height="16" viewBox="0 0 18 16">
									<rect x="7.5" y="1" width="9" height="9" fill="none" stroke="#f4f4f4" strokeWidth="1.6" />
									<rect x="1.5" y="5" width="9" height="9" fill="#8fa8c4" stroke="#ececec" strokeWidth="2" />
								</svg>
							</ViewButton>
							<ViewButton $close>
								<svg width="16" height="13" viewBox="0 0 16 13">
									<path d="M2.5 1.5l11 10M13.5 1.5l-11 10" stroke="#f2f2f2" strokeWidth="3.2" />
								</svg>
							</ViewButton>
						</ViewButtons>
					</ViewTitle>
					<ViewTools>
						<ViewCell>
							<Icon name="fence" size={16} />
						</ViewCell>
						<DropArrow $width={16} />
						<ViewCell>
							<Icon name="eyeBall" size={16} />
						</ViewCell>
						<ViewCell>
							<Icon name="sun" size={16} />
						</ViewCell>
						<DropArrow $width={15} />
						<Divider />
						<ViewCell>
							<Icon name="lamp" size={16} />
						</ViewCell>
						{VIEW_TOOLS_A.map((name) => (
							<ViewCell key={name}>
								<Icon name={name} size={16} />
							</ViewCell>
						))}
						<Divider />
						{["feet", "prevView", "nextView"].map((name) => (
							<ViewCell key={name}>
								<Icon name={name} size={16} />
							</ViewCell>
						))}
						<Divider />
						{["copyView", "clip", "camera", "viewSet"].map((name) => (
							<ViewCell key={name}>
								<Icon name={name} size={16} />
							</ViewCell>
						))}
					</ViewTools>
					<Canvas>
						<Scene />
					</Canvas>
				</ViewWindow>
			</Workspace>
			<FloatingDialog>
				<DialogTitle>
					<Icon name="hand2" size={17} />
					<DialogName>选择元素</DialogName>
					<DialogControls>
						<Control viewBox="0 0 12 12">
							<path d="M1 6.5h10" stroke="#bbb" />
						</Control>
						<Control viewBox="0 0 12 12">
							<rect x="1.5" y="1.5" width="9" height="9" fill="none" stroke="#ddd" />
						</Control>
						<Control viewBox="0 0 12 12">
							<path d="M1 1l10 10M11 1L1 11" stroke="#aaa" />
						</Control>
					</DialogControls>
				</DialogTitle>
				<DialogBody>
					<ModeColumn>
						<ModeGroup>
							<ModeCell $active>
								<Icon name="pick" size={14} />
							</ModeCell>
							{["mRect", "mShape", "mCircle", "mLine"].map((name) => (
								<ModeCell key={name}>
									<Icon name={name} size={13} />
								</ModeCell>
							))}
						</ModeGroup>
						<ModeGroup>
							<ModeCell $active>
								<Icon name="mAll" size={15} />
							</ModeCell>
							{["mAdd", "mSub", "mInv", "mGlobe"].map((name) => (
								<ModeCell key={name}>
									<Icon name={name} size={13} />
								</ModeCell>
							))}
						</ModeGroup>
					</ModeColumn>
					<DialogActions>
						<Icon name="noBlock" size={17} />
						<Icon name="greyCursor" size={18} />
					</DialogActions>
					<MoreArrow />
				</DialogBody>
			</FloatingDialog>
		</Page>
	);
}

const Page = styled.div`
	position: relative;
	width: 1166px;
	height: 606px;
	display: flex;
	flex-direction: column;
	overflow: hidden;
	background: #efefef;
	font-family: ${CJK};
	filter: blur(0.3px);
`;

const TitleBar = styled.div`
	height: 26px;
	flex: none;
	display: flex;
	align-items: center;
	padding-left: 5px;
	background: #fff;
`;

const AppLogo = styled.svg`
	width: 15px;
	height: 15px;
	margin-right: 5px;
`;

const TitleText = styled.div`
	font-size: 12.2px;
	color: #a2a2a2;
	white-space: nowrap;
`;

const WindowControls = styled.div`
	margin-left: auto;
	display: flex;
	gap: 34px;
	padding-right: 18px;
`;

const Control = styled.svg`
	width: 12px;
	height: 12px;
	display: block;
`;

const MenuBar = styled.div`
	height: 24px;
	flex: none;
	display: flex;
	align-items: center;
	gap: 14.8px;
	padding: 2px 0 0 12px;
	font-size: 11px;
	color: #222;
`;

const MenuItem = styled.span`
	white-space: nowrap;
`;

const ToolRow = styled.div`
	height: 26px;
	flex: none;
	display: flex;
	gap: 2px;
`;

const ToolGroup = styled.div<{ $width: number }>`
	width: ${(p) => p.$width}px;
	height: 25px;
	display: flex;
	align-items: center;
	border-radius: 3px;
	background: linear-gradient(#f7f7f7, #dedede);
`;

const SnapTools = styled.div`
	display: flex;
	align-items: center;
	margin-left: 5px;
`;

const Grip = styled.div`
	width: 2px;
	height: 18px;
	margin: 0 1px;
	flex: none;
	border-left: 2px dotted #a4a4a4;
`;

const ToolCell = styled.div<{ $active?: boolean; $width: number }>`
	width: ${(p) => p.$width}px;
	height: 22px;
	flex: none;
	display: flex;
	align-items: center;
	justify-content: center;
	${(p) =>
		p.$active &&
		`
		background: linear-gradient(#fde6b4, #f5b565);
		border: 1px solid #9db4d4;
	`}
`;

const DropArrow = styled.div<{ $width: number; $muted?: boolean }>`
	width: ${(p) => p.$width}px;
	height: 22px;
	flex: none;
	display: flex;
	align-items: center;
	justify-content: center;

	&::after {
		content: "";
		border-left: 4px solid transparent;
		border-right: 4px solid transparent;
		border-top: 5px solid ${(p) => (p.$muted ? "#8c8c8c" : "#111")};
	}
`;

const Divider = styled.div`
	width: 1px;
	height: 22px;
	margin: 0 1.5px;
	flex: none;
	background: #a8a8a8;
	box-shadow: 1px 0 0 #fff;
`;

const LevelSelect = styled.div`
	position: relative;
	width: 131px;
	height: 22px;
	flex: none;
	display: flex;
	align-items: center;
	padding-left: 2px;
	font-size: 11px;
	color: #222;
	background: linear-gradient(#e8e8e8, #d2d2d2);
	border: 1px solid #bcbcbc;
`;

const SelectArrow = styled.div`
	margin-left: auto;
	margin-right: 3px;
	border-left: 4px solid transparent;
	border-right: 4px solid transparent;
	border-top: 5px solid #111;
`;

const StatItem = styled.div<{ $muted?: boolean }>`
	width: 64.5px;
	height: 22px;
	flex: none;
	display: grid;
	grid-template-columns: 20px 22px 16px;
	align-items: center;
	justify-items: center;
	padding-left: 3px;
	border-right: 1px solid #a8a8a8;
	font-size: 11px;
	color: ${(p) => (p.$muted ? "#9a9a9a" : "#333")};

	&:last-child {
		border-right: none;
	}
`;

const Workspace = styled.div`
	flex: 1;
	min-height: 0;
	display: flex;
	border-top: 2px solid #8c8c8c;
`;

const Dock = styled.div`
	width: 212px;
	flex: none;
	display: flex;
	flex-direction: column;
	background: #efefef;
	overflow: hidden;
`;

const DockTitle = styled.div`
	height: 19px;
	padding: 3px 0 0 2px;
	font-size: 11px;
	line-height: 14px;
	color: #333;
`;

const DockTab = styled.div`
	height: 24px;
	margin-left: 2px;
	border: 1px solid #9fb4cc;
	background: #fff;
`;

const TaskStrip = styled.div`
	height: 52px;
	margin-left: 5px;
	display: flex;
	flex-direction: column;
	gap: 3px;
`;

const TaskButton = styled.div`
	width: 24px;
	height: 26px;
	margin-top: 2px;
	background: linear-gradient(#f0a850, #d8e0d0);
`;

const TaskRow = styled.div`
	flex: 1;
	background: #dbeafa;
`;

const Toolbox = styled.div`
	width: 204px;
	height: 259px;
	margin-left: 5px;
	padding-right: 3px;
	background: #fff;
	border-right: 1px solid #dcecf6;
	border-bottom: 2px solid #e6f3fb;
`;

const ToolSection = styled.section`
	display: grid;
	grid-template-columns: 12px 1fr;
	border-bottom: 1px solid #b8b8b8;

	&:last-child {
		border-bottom: none;
	}
`;

const SectionKey = styled.div`
	display: flex;
	align-items: center;
	justify-content: center;
	font: 700 9px "Liberation Serif", serif;
	color: #222;
	background: linear-gradient(to right, #7eacf0, #cfe0fa);
`;

const IconRow = styled.div`
	display: flex;
	height: 22.6px;
`;

const ToolboxCell = styled.div`
	width: 22px;
	display: flex;
	align-items: center;
	justify-content: center;
`;

const DockEdge = styled.div`
	width: 4px;
	flex: none;
	background: #a2a6d6;
	border-left: 1px solid #b0b0b6;
`;

const ViewWindow = styled.div`
	flex: 1;
	min-width: 0;
	display: flex;
	flex-direction: column;
`;

const ViewTitle = styled.div`
	height: 28px;
	flex: none;
	display: flex;
	align-items: center;
	padding: 3px 1px 0 1px;
	background: linear-gradient(#9ab5d4, #bcd4ec);

	> svg {
		margin-left: 1px;
	}
`;

const ViewName = styled.div`
	margin-left: 6px;
	font-size: 12px;
	color: #222;
`;

const ViewButtons = styled.div`
	margin-left: auto;
	display: flex;
	gap: 2px;
`;

const ViewButton = styled.div<{ $close?: boolean }>`
	width: 33px;
	height: 19px;
	display: flex;
	align-items: center;
	justify-content: center;
	border-radius: 2px;
	border: 1px solid ${(p) => (p.$close ? "#4a1c24" : "#60708a")};
	background: ${(p) =>
		p.$close
			? "linear-gradient(#d8806e 0%, #cc6a58 45%, #ae3a22 50%, #c04c30 100%)"
			: "linear-gradient(#bcd0e8 0%, #a8c0dc 45%, #8ca8c8 50%, #a8c4e0 100%)"};
`;

const ViewTools = styled.div`
	height: 19px;
	flex: none;
	display: flex;
	align-items: center;
	background: #f0f0f0;

	${Divider} {
		height: 16px;
		margin: 0 2px;
	}
`;

const ViewCell = styled.div`
	width: 17.2px;
	height: 18px;
	flex: none;
	display: flex;
	align-items: center;
	justify-content: center;
`;

const Canvas = styled.div`
	flex: 1;
	min-height: 0;
	background: #578d95;
`;

const SceneSvg = styled.svg`
	display: block;
	width: 100%;
	height: 100%;
`;

const FloatingDialog = styled.div`
	position: absolute;
	left: 8px;
	top: 106px;
	width: 209px;
	height: 96px;
	background: #f0f0f0;
	box-shadow: 0 1px 6px rgba(0, 0, 0, 0.4);
`;

const DialogTitle = styled.div`
	height: 24px;
	display: flex;
	align-items: center;
	padding-left: 4px;
	background: #fff;
`;

const DialogName = styled.div`
	margin-left: 3px;
	font-size: 12px;
	color: #a8a8a8;
`;

const DialogControls = styled.div`
	margin-left: auto;
	display: flex;
	gap: 34px;
	padding-right: 18px;
`;

const DialogBody = styled.div`
	position: relative;
	display: flex;
	padding: 7px 0 0 13px;
`;

const ModeColumn = styled.div`
	display: flex;
	flex-direction: column;
	gap: 6px;
`;

const ModeGroup = styled.div`
	width: 87px;
	height: 21px;
	display: flex;
	align-items: center;
	padding-left: 2px;
	border-top: 1px solid #a8a8a8;
	border-left: 1px solid #a8a8a8;
	border-bottom: 1px solid #fff;
	border-right: 1px solid #fff;
`;

const ModeCell = styled.div<{ $active?: boolean }>`
	width: 16.4px;
	height: 18px;
	display: flex;
	align-items: center;
	justify-content: center;
	${(p) =>
		p.$active &&
		`
		background: linear-gradient(#fde6b4, #f5b565);
		border: 1px solid #9db4d4;
	`}
`;

const DialogActions = styled.div`
	width: 100px;
	display: flex;
	flex-direction: column;
	align-items: center;
	gap: 11px;
	padding-top: 2px;
`;

const MoreArrow = styled.div`
	position: absolute;
	left: 181px;
	top: 52px;
	border-left: 4px solid transparent;
	border-right: 4px solid transparent;
	border-top: 5px solid #111;
`;
